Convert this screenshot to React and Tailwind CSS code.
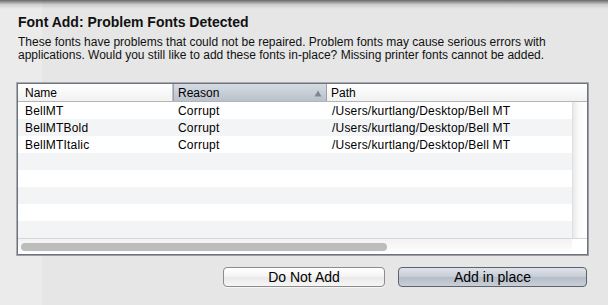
export default function App() {
  const rows = [
    { name: "BellMT", reason: "Corrupt", path: "/Users/kurtlang/Desktop/Bell MT" },
    { name: "BellMTBold", reason: "Corrupt", path: "/Users/kurtlang/Desktop/Bell MT" },
    { name: "BellMTItalic", reason: "Corrupt", path: "/Users/kurtlang/Desktop/Bell MT" },
    null, null, null, null, null,
  ];
  return (
    <div
      className="relative w-[608px] h-[305px] overflow-hidden text-black bg-[linear-gradient(to_right,#ebebeb_42px,#e6e6e6_42px)]"
      style={{ fontFamily: '"Liberation Sans", Arial, sans-serif' }}
    >
      <div className="absolute left-0 top-0 w-full h-[9px] bg-[linear-gradient(to_bottom,rgba(60,60,60,0.75),rgba(120,120,120,0.25)_50%,rgba(230,230,230,0))]" />
      <div className="pt-[14px] pl-[18px] pr-[10px]">
        <div className="text-[14px] font-bold leading-[16px] text-[#111]">
          Font Add: Problem Fonts Detected
        </div>
        <div className="mt-[6px] text-[12px] leading-[13px] text-[#111]">
          <div>These fonts have problems that could not be repaired. Problem fonts may cause serious errors with</div>
          <div>applications. Would you still like to add these fonts in-place? Missing printer fonts cannot be added.</div>
        </div>
      </div>

      <div className="ml-[17px] mt-[21px] w-[571px] h-[172px] border border-[#6f747c] shadow-[1px_1px_0_#9a9ea5,0_0_0_1px_#a8acb2] flex flex-col bg-white">
        {/* header */}
        <div className="flex h-[18px] text-[12px] border-b border-[#b5b5b5]">
          <div className="w-[155px] pl-[7px] pt-[1px] flex items-center bg-[linear-gradient(to_bottom,#ffffff,#f1f1f1)] border-r border-[#c4c4c4]">
            Name
          </div>
          <div className="w-[154px] pl-[4px] pr-[4px] pt-[1px] flex items-center justify-between bg-[linear-gradient(to_bottom,#d6dbe2,#b9c1cc)] border-r border-[#9aa1ab] border-l border-l-[#9aa1ab]">
            <span>Reason</span>
            <svg width="8" height="7" viewBox="0 0 8 7">
              <path d="M4 0.5 L7.5 6.5 L0.5 6.5 Z" fill="#7d8591" />
            </svg>
          </div>
          <div className="flex-1 pl-[4px] pt-[1px] flex items-center bg-[linear-gradient(to_bottom,#ffffff,#f1f1f1)]">
            Path
          </div>
        </div>
        {/* body */}
        <div className="flex flex-1">
          <div className="flex-1 flex flex-col">
            {rows.map((r, i) => (
              <div
                key={i}
                className={`flex h-[17px] items-center text-[12px] tracking-[0.2px] ${i % 2 === 0 ? "bg-white" : "bg-[#f3f4f6]"}`}
              >
                <div className="w-[155px] pl-[7px]">{r ? r.name : ""}</div>
                <div className="w-[154px] pl-[5px]">{r ? r.reason : ""}</div>
                <div className="flex-1 pl-[5px]">{r ? r.path : ""}</div>
              </div>
            ))}
          </div>
          <div className="w-[15px] bg-[linear-gradient(to_right,#e9e9e9,#fafafa_40%,#ffffff)] border-l border-[#e0e0e0]" />
        </div>
        {/* horizontal scrollbar */}
        <div className="flex flex-1 border-t border-[#d6d6d6]">
          <div className="flex-1 flex items-center pl-[3px] bg-[linear-gradient(to_bottom,#f2f2f2,#ffffff)]">
            <div className="w-[366px] h-[8px] rounded-full bg-[#bdbdbd]" />
          </div>
          <div className="w-[15px] bg-white" />
        </div>
      </div>

      <div className="flex justify-end gap-[13px] pr-[21px] mt-[12px]">
        <button className="w-[162px] h-[20px] rounded-[4px] border border-[#8c8c8c] bg-[linear-gradient(to_bottom,#ffffff,#f3f3f3_50%,#e9e9e9_51%,#f6f6f6)] text-[14px] leading-none text-black shadow-[0_1px_0_rgba(255,255,255,0.6)]">
          Do Not Add
        </button>
        <button className="w-[189px] h-[20px] rounded-[4px] border border-[#5d626b] bg-[linear-gradient(to_bottom,#dfe3e9,#c6ccd5_50%,#b4bcc7_51%,#c9cfd8)] text-[14px] leading-none text-black">
          Add in place
        </button>
      </div>
    </div>
  );
}
